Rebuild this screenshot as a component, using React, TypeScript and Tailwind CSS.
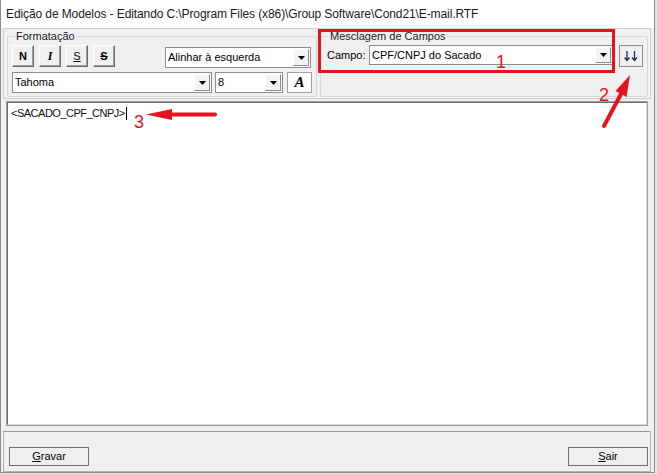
import React from 'react'

const red = '#e5141c'

function Combo({ text, className }: { text: string; className: string }) {
    return (
        <div className={`flex bg-white border border-[#8f8f8f] ${className}`}>
            <div className="flex-1 flex items-center pl-[2px] overflow-hidden whitespace-nowrap">{text}</div>
            <div className="w-[16px] m-[1px] flex items-center justify-center bg-[#f4f4f4] border border-t-white border-l-white border-r-[#8a8a8a] border-b-[#8a8a8a]">
                <svg width="7" height="4" viewBox="0 0 7 4">
                    <path d="M0 0h7L3.5 4z" fill="#000" />
                </svg>
            </div>
        </div>
    )
}

function ToolButton({ children }: { children: React.ReactNode }) {
    return (
        <div className="w-[22px] h-[22px] flex items-center justify-center bg-[#f0f0f0] border border-t-white border-l-white border-r-[#696969] border-b-[#696969] shadow-[inset_-1px_-1px_0_#a0a0a0]">
            {children}
        </div>
    )
}

export default function App() {
    return (
        <div className="relative w-[657px] h-[474px] overflow-hidden bg-[#e2e7ed] font-['Liberation_Sans',Arial,sans-serif] text-[11px] text-black">
            <div className="flex flex-col w-[655px] h-[473px] bg-[#f0f0f0] border-l border-r border-b border-[#8c8c8c]">
                {/* title bar */}
                <div className="h-[28px] shrink-0 flex items-center pl-[5px] bg-white text-[12px] tracking-[-0.1px] text-[#1a1a1a]">
                    Edição de Modelos - Editando C:\Program Files (x86)\Group Software\Cond21\E-mail.RTF
                </div>

                <div className="flex flex-col pl-[2px] pr-[3px]">
                    {/* top panel */}
                    <div className="h-[71px] flex gap-[3px] pl-[3px] pr-[2px] pt-[1px] border border-[#cfcfcf]">
                        <fieldset className="w-[310px] h-[67px] border border-[#d5d9dd] rounded-[2px] pl-[4px]">
                            <legend className="ml-[3px] px-[1px] leading-[13px] text-[#222]">Formatação</legend>
                            <div className="flex items-start mt-[2px]">
                                <div className="flex gap-[5px]">
                                    <ToolButton><span className="font-bold text-[11px]">N</span></ToolButton>
                                    <ToolButton><span className="font-['Liberation_Serif',serif] italic font-bold text-[12px]">I</span></ToolButton>
                                    <ToolButton><span className="underline text-[11px]">S</span></ToolButton>
                                    <ToolButton><span className="line-through font-bold text-[11px]">S</span></ToolButton>
                                </div>
                                <Combo text="Alinhar à esquerda" className="ml-[50px] mt-[2px] w-[146px] h-[21px]" />
                            </div>
                            <div className="flex items-start mt-[4px]">
                                <Combo text="Tahoma" className="w-[200px] h-[21px]" />
                                <Combo text="8" className="ml-[3px] w-[68px] h-[21px]" />
                                <div className="ml-[4px] w-[25px] h-[21px] flex items-center justify-center bg-white border border-[#a0a0a0]">
                                    <span className="font-['Liberation_Serif',serif] italic font-bold text-[15px] leading-none">A</span>
                                </div>
                            </div>
                        </fieldset>

                        <fieldset className="w-[328px] h-[67px] border border-[#d5d9dd] rounded-[2px] pl-[6px]">
                            <legend className="ml-[2px] px-[1px] leading-[13px] text-[#222]">Mesclagem de Campos</legend>
                            <div className="flex items-start mt-[2px]">
                                <div className="w-[42px] h-[20px] flex items-center">Campo:</div>
                                <Combo text="CPF/CNPJ do Sacado" className="w-[244px] h-[20px]" />
                                <div className="ml-[6px] w-[24px] h-[22px] flex items-center justify-center bg-[#f0f0f0] border border-[#8c8c8c]">
                                    <svg width="16" height="12" viewBox="0 0 16 12">
                                        <path d="M4 1v9M1.5 7.5L4 10.5L6.5 7.5M11.5 1v9M9 7.5L11.5 10.5L14 7.5" stroke="#1c2a6e" strokeWidth="1.3" fill="none" />
                                    </svg>
                                </div>
                            </div>
                        </fieldset>
                    </div>

                    {/* editor */}
                    <div className="mt-[2px] mx-[3px] h-[325px] border border-[#a0a0a0]">
                        <div className="h-full bg-white border border-t-[#6d6d6d] border-l-[#6d6d6d] border-r-[#d8d8d8] border-b-[#d8d8d8] pl-[3px] pt-[4px]">
                            <div className="flex items-center leading-[13px] tracking-[-0.5px] text-[#111]">
                                &lt;SACADO_CPF_CNPJ&gt;
                                <span className="ml-[1px] w-[1px] h-[13px] bg-black" />
                            </div>
                        </div>
                    </div>

                    {/* bottom panel */}
                    <div className="mt-[5px] h-[41px] flex justify-between items-start pt-[15px] pl-[5px] pr-[2px] border border-[#b4b4b4] border-t-[#9a9a9a]">
                        <div className="w-[80px] h-[19px] flex items-center justify-center bg-[#efefef] border border-[#6f6f6f]">
                            <span><span className="underline">G</span>ravar</span>
                        </div>
                        <div className="w-[80px] h-[19px] flex items-center justify-center bg-[#efefef] border border-[#6f6f6f]">
                            <span><span className="underline">S</span>air</span>
                        </div>
                    </div>
                </div>
            </div>

            {/* annotations */}
            <div className="absolute left-[318px] top-[29px] w-[297px] h-[44px] border-[3px] border-[#e5141c]" />
            <div className="absolute left-[496px] top-[53px] text-[18px] leading-none text-[#e5141c]">1</div>
            <div className="absolute left-[599px] top-[86px] text-[18px] leading-none text-[#e5141c]">2</div>
            <div className="absolute left-[134px] top-[113px] text-[18px] leading-none text-[#e5141c]">3</div>
            <svg className="absolute left-0 top-0" width="657" height="474" viewBox="0 0 657 474">
                <line x1="604" y1="126" x2="621" y2="94" stroke={red} strokeWidth="4" strokeLinecap="round" />
                <path d="M630 75L626.5 97L615.5 91z" fill={red} />
                <line x1="168" y1="114.5" x2="215" y2="114.5" stroke={red} strokeWidth="4" strokeLinecap="round" />
                <path d="M146 114.5L172 109L172 120z" fill={red} />
            </svg>
        </div>
    )
}
